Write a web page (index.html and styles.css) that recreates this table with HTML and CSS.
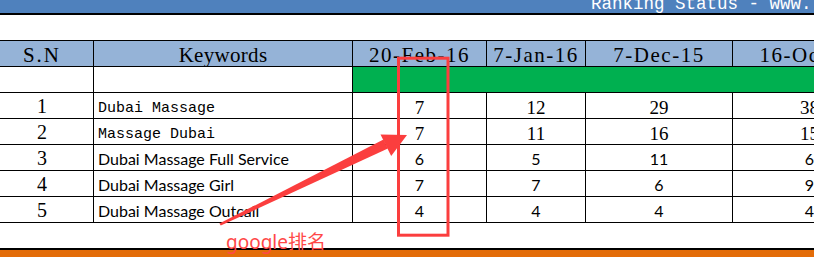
FILE: index.html
```html
<!DOCTYPE html>
<html>
<head>
<meta charset="utf-8">
<link rel="stylesheet" href="styles.css">
</head>
<body>
<div class="page">
  <div class="title-bar"><span class="title">Ranking Status - www.luxurymassagedubai.com</span></div>
  <div class="title-rule"></div>
  <div class="sheet">
    <div class="cell head sn">S.N</div>
    <div class="cell head">Keywords</div>
    <div class="cell head date">20-Feb-16</div>
    <div class="cell head date">7-Jan-16</div>
    <div class="cell head date">7-Dec-15</div>
    <div class="cell head date">16-Oct-15</div>

    <div class="cell"></div>
    <div class="cell"></div>
    <div class="cell green"></div>

    <div class="cell idx">1</div>
    <div class="cell kw mono">Dubai Massage</div>
    <div class="cell num serif">7</div>
    <div class="cell num serif">12</div>
    <div class="cell num serif">29</div>
    <div class="cell num serif">38</div>

    <div class="cell idx">2</div>
    <div class="cell kw mono">Massage Dubai</div>
    <div class="cell num serif">7</div>
    <div class="cell num serif">11</div>
    <div class="cell num serif">16</div>
    <div class="cell num serif">15</div>

    <div class="cell idx">3</div>
    <div class="cell kw sans">Dubai Massage Full Service</div>
    <div class="cell num sans">6</div>
    <div class="cell num sans">5</div>
    <div class="cell num sans">11</div>
    <div class="cell num sans">6</div>

    <div class="cell idx">4</div>
    <div class="cell kw sans">Dubai Massage Girl</div>
    <div class="cell num sans">7</div>
    <div class="cell num sans">7</div>
    <div class="cell num sans">6</div>
    <div class="cell num sans">9</div>

    <div class="cell idx">5</div>
    <div class="cell kw sans">Dubai Massage Outcall</div>
    <div class="cell num sans">4</div>
    <div class="cell num sans">4</div>
    <div class="cell num sans">4</div>
    <div class="cell num sans">4</div>
  </div>
  <div class="spacer"></div>
  <div class="bottom-rule"></div>
  <div class="bottom-bar"></div>

  <svg class="marks" width="814" height="257" viewBox="0 0 814 257">
    <rect x="398.5" y="58.2" width="49.5" height="177" fill="none" stroke="#fb3e3e" stroke-width="3"/>
    <polygon points="219.4,223.6 383.5,139.6 387.9,148.6 220.8,225.6" fill="#fb3e3e"/>
    <polygon points="407,135 380.5,134.4 391.2,156.1" fill="#fb3e3e"/>
  </svg>
  <div class="note">google排名</div>
</div>
</body>
</html>
```
FILE: styles.css
```css
html, body {
  margin: 0;
  padding: 0;
  background: #ffffff;
}
.page {
  position: relative;
  width: 814px;
  height: 257px;
  overflow: hidden;
}
.title-bar {
  height: 13px;
  background: #4f81bd;
  overflow: hidden;
  padding-left: 591px;
  white-space: nowrap;
}
.title {
  font-family: "Liberation Mono", monospace;
  font-size: 17.5px;
  line-height: 8px;
  color: #ffffff;
  display: block;
}
.title-rule {
  height: 2px;
  background: #000000;
}
.sheet {
  margin-top: 25px;
  margin-left: -9px;
  width: 905px;
  display: grid;
  grid-template-columns: 103px 259px 134px 99px 147px 154px;
  grid-auto-rows: 26px;
  border-top: 1px solid #000;
}
.cell {
  box-sizing: border-box;
  border-right: 1px solid #000;
  border-bottom: 1px solid #000;
  white-space: nowrap;
  overflow: hidden;
  color: #000;
}
.head {
  background: #95b3d7;
  font-family: "Liberation Serif", serif;
  font-size: 21px;
  line-height: 23px;
  padding-top: 3px;
  text-align: center;
  letter-spacing: 0.3px;
}
.sn {
  letter-spacing: 2px;
}
.date {
  letter-spacing: 1.5px;
}
.green {
  grid-column: span 4;
  background: #00b050;
}
.idx {
  font-family: "Liberation Serif", serif;
  font-size: 20px;
  line-height: 22px;
  padding-top: 2px;
  text-align: center;
}
.kw {
  padding-left: 4px;
}
.num {
  text-align: center;
}
.mono {
  font-family: "Liberation Mono", monospace;
  font-size: 15px;
  line-height: 17px;
  padding-top: 7px;
}
.serif {
  font-family: "Liberation Serif", serif;
  font-size: 19px;
  line-height: 21px;
  padding-top: 4px;
}
.sans {
  font-family: "Lato", sans-serif;
  font-size: 16px;
  line-height: 19px;
  padding-top: 4px;
}
.spacer {
  height: 25px;
}
.bottom-rule {
  height: 2px;
  background: #000;
}
.bottom-bar {
  height: 8px;
  background: #e36c09;
}
.marks {
  position: absolute;
  left: 0;
  top: 0;
  pointer-events: none;
}
.note {
  position: absolute;
  left: 226px;
  top: 231px;
  font-family: "Noto Sans", "Noto Sans CJK SC", sans-serif;
  font-size: 19px;
  line-height: 22px;
  color: #ff4848;
  white-space: nowrap;
}
```
